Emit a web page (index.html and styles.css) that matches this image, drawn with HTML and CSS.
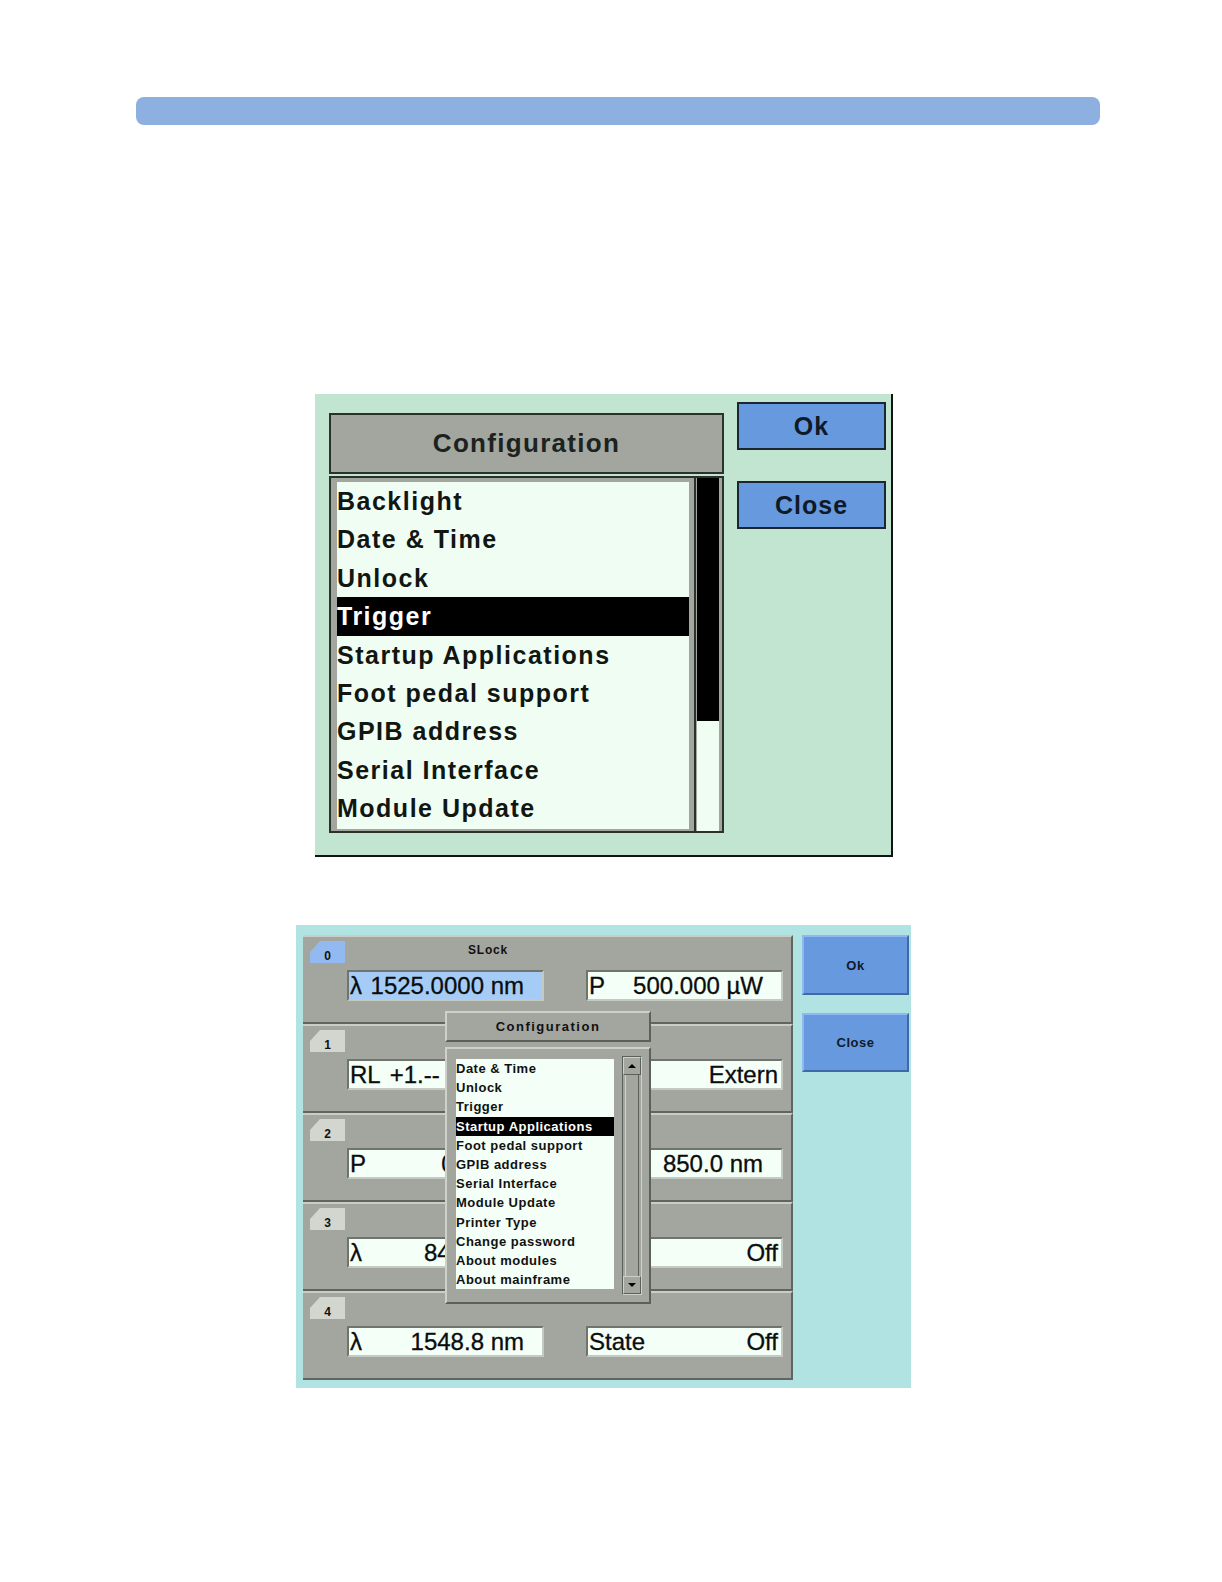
FILE: index.html
```html
<!DOCTYPE html>
<html>
<head>
<meta charset="utf-8">
<link rel="stylesheet" href="styles.css">
</head>
<body>
<div class="topbar"></div>

<div class="screen1">
  <div class="s1-main">
    <div class="s1-title">Configuration</div>
    <div class="s1-list">
      <div class="s1-items">
        <div class="s1-item">Backlight</div>
        <div class="s1-item">Date &amp; Time</div>
        <div class="s1-item">Unlock</div>
        <div class="s1-item sel">Trigger</div>
        <div class="s1-item">Startup Applications</div>
        <div class="s1-item">Foot pedal support</div>
        <div class="s1-item">GPIB address</div>
        <div class="s1-item">Serial Interface</div>
        <div class="s1-item">Module Update</div>
      </div>
      <div class="s1-scroll">
        <div class="s1-thumb"></div>
        <div class="s1-track"></div>
      </div>
    </div>
  </div>
  <div class="s1-buttons">
    <div class="s1-btn">Ok</div>
    <div class="s1-btn">Close</div>
  </div>
</div>

<div class="screen2">
  <div class="panel">
    <div class="row">
      <div class="row-head"><div class="tab active">0</div><div class="slock">SLock</div></div>
      <div class="fields">
        <div class="field blue"><span>λ</span><span class="u">1525.0000 nm</span></div>
        <div class="field"><span>P</span><span class="u">500.000 µW</span></div>
      </div>
    </div>
    <div class="row">
      <div class="row-head"><div class="tab">1</div></div>
      <div class="fields">
        <div class="field start"><span>RL</span><span class="gap">+1.--</span></div>
        <div class="field end"><span>Extern</span></div>
      </div>
    </div>
    <div class="row">
      <div class="row-head"><div class="tab">2</div></div>
      <div class="fields">
        <div class="field"><span>P</span><span class="u">0.0 mW</span></div>
        <div class="field end"><span class="u">850.0 nm</span></div>
      </div>
    </div>
    <div class="row">
      <div class="row-head"><div class="tab">3</div></div>
      <div class="fields">
        <div class="field"><span>λ</span><span class="u">846.0 nm</span></div>
        <div class="field end"><span>Off</span></div>
      </div>
    </div>
    <div class="row">
      <div class="row-head"><div class="tab">4</div></div>
      <div class="fields">
        <div class="field"><span>λ</span><span class="u">1548.8 nm</span></div>
        <div class="field"><span>State</span><span>Off</span></div>
      </div>
    </div>
  </div>
  <div class="s2-buttons">
    <div class="s2-btn">Ok</div>
    <div class="s2-btn close">Close</div>
  </div>

  <div class="popup">
    <div class="pop-title">Configuration</div>
    <div class="pop-list">
      <div class="pop-items">
        <div class="pop-item">Date &amp; Time</div>
        <div class="pop-item">Unlock</div>
        <div class="pop-item">Trigger</div>
        <div class="pop-item sel">Startup Applications</div>
        <div class="pop-item">Foot pedal support</div>
        <div class="pop-item">GPIB address</div>
        <div class="pop-item">Serial Interface</div>
        <div class="pop-item">Module Update</div>
        <div class="pop-item">Printer Type</div>
        <div class="pop-item">Change password</div>
        <div class="pop-item">About modules</div>
        <div class="pop-item">About mainframe</div>
      </div>
      <div class="pop-scroll">
        <div class="sb-btn"><div class="tri-up"></div></div>
        <div class="sb-track"></div>
        <div class="sb-btn"><div class="tri-down"></div></div>
      </div>
    </div>
  </div>
</div>
</body>
</html>
```

FILE: styles.css
```css
* { box-sizing: border-box; }

body {
  margin: 0;
  background: #ffffff;
  font-family: "Liberation Sans", Arial, sans-serif;
  color: #111;
}

.topbar {
  margin: 97px 0 0 136px;
  width: 964px;
  height: 28px;
  border-radius: 8px;
  background: #8db0e0;
}

/* ---------- Screen 1 ---------- */
.screen1 {
  margin: 269px 0 0 315px;
  width: 578px;
  height: 463px;
  background: #c2e5d1;
  border-right: 2px solid #121412;
  border-bottom: 2px solid #121412;
  display: flex;
  align-items: flex-start;
  padding-left: 14px;
  gap: 13px;
}

.s1-main {
  width: 395px;
  margin-top: 19px;
}

.s1-title {
  height: 61px;
  border: 2px solid #2b312b;
  background: #a2a69e;
  display: flex;
  align-items: center;
  justify-content: center;
  font-size: 26px;
  font-weight: bold;
  letter-spacing: 1.3px;
  color: #1b2220;
}

.s1-list {
  margin-top: 2px;
  height: 357px;
  border: 2px solid #2b312b;
  background: #a2a69e;
  display: flex;
  padding: 4px 0 2px 6px;
}

.s1-items {
  width: 352px;
  background: #effdf3;
}

.s1-item {
  height: 38.4px;
  line-height: 38.4px;
  font-size: 25px;
  font-weight: bold;
  letter-spacing: 1.5px;
  white-space: nowrap;
  color: #111611;
}

.s1-item.sel {
  background: #000;
  color: #fff;
}

.s1-scroll {
  margin: -4px 0 -2px 5px;
  width: 28px;
  border-left: 2px solid #2b312b;
  padding: 0 3px 0 1px;
  display: flex;
  flex-direction: column;
}

.s1-thumb {
  height: 243px;
  background: #000;
}

.s1-track {
  flex: 1;
  background: #effdf3;
}

.s1-buttons {
  width: 149px;
  margin-top: 8px;
  display: flex;
  flex-direction: column;
  gap: 31px;
}

.s1-btn {
  height: 48px;
  border: 2px solid #1d2530;
  background: #6699dd;
  display: flex;
  align-items: center;
  justify-content: center;
  font-size: 25px;
  font-weight: bold;
  letter-spacing: 1px;
  color: #0f1a28;
}

/* ---------- Screen 2 ---------- */
.screen2 {
  position: relative;
  margin: 68px 0 0 296px;
  width: 615px;
  height: 463px;
  background: #b2e3e3;
  display: flex;
  align-items: flex-start;
  padding: 10px 0 0 7px;
  gap: 9px;
}

.panel {
  width: 490px;
  background: #a2a69e;
}

.row {
  height: 89px;
  border-top: 2px solid #c9cdc5;
  border-bottom: 2px solid #5f6660;
  border-right: 2px solid #5f6660;
  padding-top: 4px;
}

.row-head {
  display: flex;
  align-items: center;
  height: 22px;
}

.tab {
  margin-left: 7px;
  width: 35px;
  height: 22px;
  background: #d2d6ce;
  clip-path: polygon(10px 0, 100% 0, 100% 100%, 0 100%, 0 11px);
  display: flex;
  align-items: center;
  justify-content: center;
  padding-top: 7px;
  font-size: 12px;
  font-weight: bold;
  color: #111;
}

.tab.active {
  background: #92baf0;
}

.slock {
  margin-left: 123px;
  margin-bottom: 4px;
  font-size: 12px;
  font-weight: bold;
  letter-spacing: 0.8px;
  color: #111;
}

.fields {
  display: flex;
  gap: 42px;
  margin-top: 7px;
  padding-left: 44px;
}

.field {
  width: 197px;
  height: 31px;
  border-style: solid;
  border-width: 2px;
  border-color: #6f746e #c4c9c1 #c4c9c1 #6f746e;
  background: #f3fff7;
  display: flex;
  align-items: center;
  justify-content: space-between;
  padding: 0 3px 0 1px;
  font-size: 24px;
  -webkit-text-stroke: 0.3px #0c0c0c;
  white-space: nowrap;
  overflow: hidden;
  color: #0c0c0c;
}

.field.blue {
  background: #a5ccf6;
}

.field.start {
  justify-content: flex-start;
}

.field.end {
  justify-content: flex-end;
}

.field .u {
  padding-right: 15px;
}

.field .gap {
  margin-left: 9px;
}

.s2-buttons {
  width: 107px;
  display: flex;
  flex-direction: column;
  gap: 18px;
}

.s2-btn {
  height: 60px;
  border-style: solid;
  border-width: 2px;
  border-color: #8fb8f2 #3f6aa8 #3f6aa8 #8fb8f2;
  background: #6699dd;
  display: flex;
  align-items: center;
  justify-content: center;
  font-size: 13px;
  font-weight: bold;
  letter-spacing: 0.5px;
  color: #111a28;
}

.s2-btn.close {
  height: 59px;
}

/* ---------- Popup ---------- */
.popup {
  position: absolute;
  left: 149px;
  top: 86px;
  width: 206px;
}

.pop-title {
  height: 31px;
  border-style: solid;
  border-width: 2px;
  border-color: #cdd1c9 #5a615b #5a615b #cdd1c9;
  background: #a2a69e;
  display: flex;
  align-items: center;
  justify-content: center;
  font-size: 13px;
  font-weight: bold;
  letter-spacing: 1.5px;
  color: #111;
}

.pop-list {
  margin-top: 5px;
  height: 257px;
  border-style: solid;
  border-width: 2px;
  border-color: #cdd1c9 #5a615b #5a615b #cdd1c9;
  background: #a2a69e;
  display: flex;
  align-items: flex-start;
  padding: 10px 7px 6px 9px;
  gap: 8px;
}

.pop-items {
  width: 158px;
  height: 230px;
  background: #f3fff7;
}

.pop-item {
  height: 19.2px;
  line-height: 19.2px;
  font-size: 13px;
  font-weight: bold;
  letter-spacing: 0.5px;
  white-space: nowrap;
  color: #111;
}

.pop-item.sel {
  background: #000;
  color: #fff;
}

.pop-scroll {
  width: 20px;
  height: 239px;
  margin-top: -3px;
  border-style: solid;
  border-width: 1px;
  border-color: #5a615b #cdd1c9 #cdd1c9 #5a615b;
  display: flex;
  flex-direction: column;
}

.sb-btn {
  height: 18px;
  border-style: solid;
  border-width: 1px;
  border-color: #cdd1c9 #5a615b #5a615b #cdd1c9;
  display: flex;
  align-items: center;
  justify-content: center;
}

.sb-track {
  flex: 1;
  margin: 0 2px;
  border-left: 1px solid #cdd1c9;
  border-right: 1px solid #5a615b;
}

.tri-up {
  width: 0;
  height: 0;
  border-left: 4px solid transparent;
  border-right: 4px solid transparent;
  border-bottom: 4px solid #000;
}

.tri-down {
  width: 0;
  height: 0;
  border-left: 4px solid transparent;
  border-right: 4px solid transparent;
  border-top: 4px solid #000;
}
```
